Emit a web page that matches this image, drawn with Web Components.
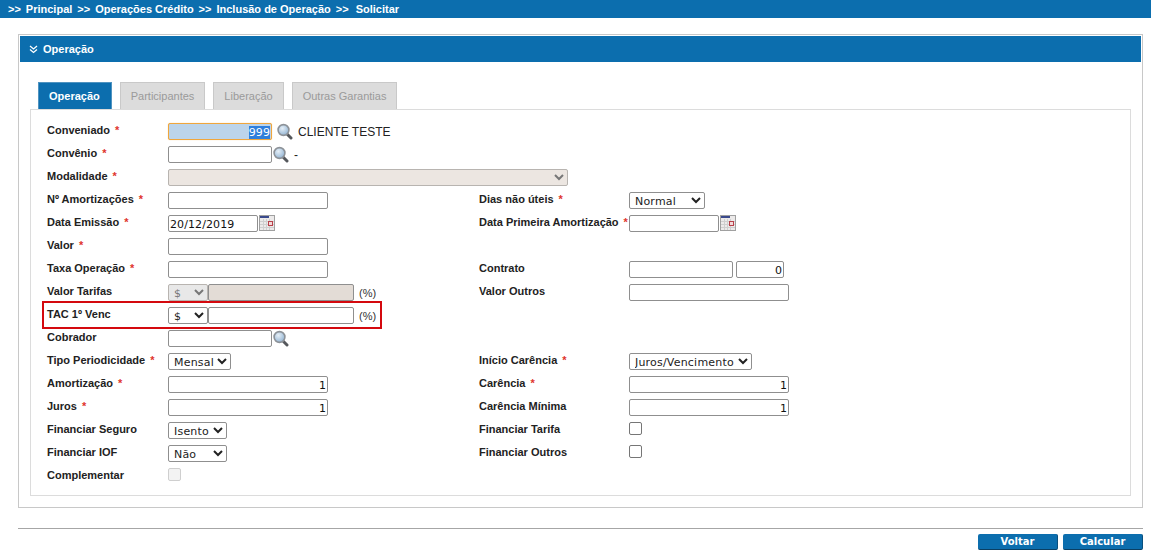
<!DOCTYPE html>
<html lang="pt-BR">
<head>
<meta charset="utf-8">
<title>Solicitar</title>
<style>
  html, body { margin: 0; background: #fff; }
  body { font-family: "Liberation Sans", Arial, sans-serif; font-size: 11px; color: #222; }
</style>
</head>
<body>
<app-breadcrumb>
  <span>Principal</span><span>Operações Crédito</span><span>Inclusão de Operação</span><span>Solicitar</span>
</app-breadcrumb>

<app-page>
  <app-panel title="Operação">
    <app-tabs>
      <app-tab active>Operação</app-tab>
      <app-tab>Participantes</app-tab>
      <app-tab>Liberação</app-tab>
      <app-tab>Outras Garantias</app-tab>
    </app-tabs>
    <form-box>
      <form-row>
        <form-label slot="label" required>Conveniado</form-label>
        <text-box slot="field" width="104" value="999" focused></text-box>
        <search-icon slot="field" gap="5"></search-icon>
        <span slot="field" class="desc">CLIENTE TESTE</span>
      </form-row>
      <form-row>
        <form-label slot="label" required>Convênio</form-label>
        <text-box slot="field" width="104"></text-box>
        <search-icon slot="field"></search-icon>
        <span slot="field" class="dash">-</span>
      </form-row>
      <form-row>
        <form-label slot="label" required>Modalidade</form-label>
        <select-box slot="field" width="400" disabled bg="#ece6e1"></select-box>
      </form-row>
      <form-row>
        <form-label slot="label" required>Nº Amortizações</form-label>
        <text-box slot="field" width="160"></text-box>
        <form-label slot="label2" required>Dias não úteis</form-label>
        <select-box slot="field2" width="76" value="Normal"></select-box>
      </form-row>
      <form-row>
        <form-label slot="label" required>Data Emissão</form-label>
        <text-box slot="field" width="90" value="20/12/2019" align="left"></text-box>
        <calendar-icon slot="field"></calendar-icon>
        <form-label slot="label2" required>Data Primeira Amortização</form-label>
        <text-box slot="field2" width="90"></text-box>
        <calendar-icon slot="field2"></calendar-icon>
      </form-row>
      <form-row>
        <form-label slot="label" required>Valor</form-label>
        <text-box slot="field" width="160"></text-box>
      </form-row>
      <form-row>
        <form-label slot="label" required>Taxa Operação</form-label>
        <text-box slot="field" width="160"></text-box>
        <form-label slot="label2">Contrato</form-label>
        <text-box slot="field2" width="104"></text-box>
        <text-box slot="field2" width="48" value="0" gap="3"></text-box>
      </form-row>
      <form-row>
        <form-label slot="label">Valor Tarifas</form-label>
        <select-box slot="field" width="40" value="$" disabled bg="#e8e8e8"></select-box>
        <text-box slot="field" width="146" disabled></text-box>
        <span slot="field" class="pct">(%)</span>
        <form-label slot="label2">Valor Outros</form-label>
        <text-box slot="field2" width="160"></text-box>
      </form-row>
      <form-row highlight>
        <form-label slot="label">TAC 1º Venc</form-label>
        <select-box slot="field" width="40" value="$"></select-box>
        <text-box slot="field" width="146"></text-box>
        <span slot="field" class="pct">(%)</span>
      </form-row>
      <form-row>
        <form-label slot="label">Cobrador</form-label>
        <text-box slot="field" width="104"></text-box>
        <search-icon slot="field"></search-icon>
      </form-row>
      <form-row>
        <form-label slot="label" required>Tipo Periodicidade</form-label>
        <select-box slot="field" width="63" value="Mensal"></select-box>
        <form-label slot="label2" required>Início Carência</form-label>
        <select-box slot="field2" width="123" value="Juros/Vencimento"></select-box>
      </form-row>
      <form-row>
        <form-label slot="label" required>Amortização</form-label>
        <text-box slot="field" width="160" value="1"></text-box>
        <form-label slot="label2" required>Carência</form-label>
        <text-box slot="field2" width="160" value="1"></text-box>
      </form-row>
      <form-row>
        <form-label slot="label" required>Juros</form-label>
        <text-box slot="field" width="160" value="1"></text-box>
        <form-label slot="label2">Carência Mínima</form-label>
        <text-box slot="field2" width="160" value="1"></text-box>
      </form-row>
      <form-row>
        <form-label slot="label">Financiar Seguro</form-label>
        <select-box slot="field" width="59" value="Isento"></select-box>
        <form-label slot="label2">Financiar Tarifa</form-label>
        <check-box slot="field2"></check-box>
      </form-row>
      <form-row>
        <form-label slot="label">Financiar IOF</form-label>
        <select-box slot="field" width="59" value="Não"></select-box>
        <form-label slot="label2">Financiar Outros</form-label>
        <check-box slot="field2"></check-box>
      </form-row>
      <form-row>
        <form-label slot="label">Complementar</form-label>
        <check-box slot="field" disabled></check-box>
      </form-row>
    </form-box>
  </app-panel>
  <app-footer>
    <app-button>Voltar</app-button>
    <app-button>Calcular</app-button>
  </app-footer>
</app-page>

<script>
  const BLUE = '#0c6eae';

  // small helper so every element below has the same setup
  class Base extends HTMLElement {
    constructor() {
      super();
      this.shadow = this.attachShadow({mode: 'open'});
    }

    connectedCallback() {
      this.render();
    }
  }

  class AppBreadcrumb extends Base {
    render() {
      const parts = [...this.children].map((el) => `<i>&gt;&gt;</i><b>${el.textContent}</b>`).join('');
      this.shadow.innerHTML = `
        <style>
          :host{
            display: flex;
            align-items: center;
            height: 18px;
            padding: 0 0 1px 8px;
            box-sizing: border-box;
            background: ${BLUE};
            color: #fff;
            font: bold 11px "Liberation Sans", Arial, sans-serif;
          }
          i{ font-style: normal; margin-right: 5px; }
          b{ margin-right: 5px; }
          b:last-child{ margin-left: 2px; }
        </style>
        ${parts}
      `;
    }
  }

  class AppPage extends Base {
    render() {
      this.shadow.innerHTML = `
        <style>
          :host{
            display: block;
            width: 1125px;
            margin: 16px 0 0 18px;
          }
        </style>
        <slot></slot>
      `;
    }
  }

  class AppPanel extends Base {
    render() {
      this.shadow.innerHTML = `
        <style>
          :host{
            display: block;
            border: 1px solid #c8c8c8;
            padding: 1px;
          }
          .head{
            display: flex;
            align-items: center;
            gap: 5px;
            height: 26px;
            padding-left: 9px;
            background: ${BLUE};
            color: #fff;
            font: bold 11px "Liberation Sans", Arial, sans-serif;
          }
          .body{
            padding: 20px 10px 10px;
          }
        </style>
        <div class="head">
          <svg width="9" height="9" viewBox="0 0 9 9" fill="none" stroke="#fff" stroke-width="1.3">
            <path d="M1 1 L4.5 4 L8 1 M1 4.5 L4.5 7.5 L8 4.5"/>
          </svg>
          <span>${this.getAttribute('title')}</span>
        </div>
        <div class="body"><slot></slot></div>
      `;
    }
  }

  class AppTabs extends Base {
    render() {
      this.shadow.innerHTML = `
        <style>
          :host{
            display: flex;
            gap: 8px;
            margin-left: 8px;
            height: 27px;
          }
        </style>
        <slot></slot>
      `;
    }
  }

  class AppTab extends Base {
    render() {
      const active = this.hasAttribute('active');
      this.shadow.innerHTML = `
        <style>
          :host{
            display: flex;
            align-items: center;
            box-sizing: border-box;
            height: 27px;
            padding: 0 ${active ? 11 : 10}px 0 10px;
            border: 1px solid ${active ? '#4f93c0' : '#c9c9c9'};
            border-bottom: none;
            background: ${active ? BLUE : '#dcdcdc'};
            color: ${active ? '#fff' : '#9a9a9a'};
            font: ${active ? 'bold' : 'normal'} 11px "Liberation Sans", Arial, sans-serif;
          }
        </style>
        <slot></slot>
      `;
    }
  }

  class FormBox extends Base {
    render() {
      this.shadow.innerHTML = `
        <style>
          :host{
            display: block;
            border: 1px solid #dcdcdc;
            padding: 12px 16px 5px;
          }
        </style>
        <slot></slot>
      `;
    }
  }

  class FormRow extends Base {
    render() {
      this.shadow.innerHTML = `
        <style>
          :host{
            display: grid;
            grid-template-columns: 121px 311px 150px 1fr;
            height: 23px;
            position: relative;
          }
          .cell{
            display: flex;
            align-items: flex-start;
            padding-top: 1px;
          }
          ::slotted(.desc){
            margin: 2px 0 0 5px;
            font-size: 12px;
            color: #222;
          }
          ::slotted(.dash){
            margin: 2px 0 0 5px;
            font-size: 12px;
          }
          ::slotted(.pct){
            margin: 3px 0 0 5px;
            font-size: 11px;
            color: #333;
          }
          .mark{
            position: absolute;
            left: -5px;
            top: -5px;
            width: 340px;
            height: 28px;
            box-sizing: border-box;
            border: 2px solid #d4090e;
            pointer-events: none;
          }
        </style>
        <div class="cell"><slot name="label"></slot></div>
        <div class="cell"><slot name="field"></slot></div>
        <div class="cell"><slot name="label2"></slot></div>
        <div class="cell"><slot name="field2"></slot></div>
        ${this.hasAttribute('highlight') ? '<div class="mark"></div>' : ''}
      `;
    }
  }

  class FormLabel extends Base {
    render() {
      const star = this.hasAttribute('required') ? '<em>*</em>' : '';
      this.shadow.innerHTML = `
        <style>
          :host{
            display: block;
            white-space: nowrap;
            font: bold 11px/14px "Liberation Sans", Arial, sans-serif;
            color: #222;
          }
          em{
            font-style: normal;
            color: #e0342c;
            margin-left: 5px;
          }
        </style>
        <slot></slot>${star}
      `;
    }
  }

  class TextBox extends Base {
    render() {
      const value = this.getAttribute('value') || '';
      const focused = this.hasAttribute('focused');
      const disabled = this.hasAttribute('disabled');
      const bg = focused ? '#bcd4ea' : disabled ? '#e3dcd6' : '#fff';
      this.shadow.innerHTML = `
        <style>
          :host{
            display: block;
            flex: none;
            box-sizing: border-box;
            width: ${this.getAttribute('width')}px;
            height: 17px;
            margin-left: ${this.getAttribute('gap') || 0}px;
            padding: 0 1px;
            border: 1px solid ${focused ? '#f0a63c' : '#8f8f8f'};
            border-radius: 2px;
            background: ${bg};
            ${focused ? 'box-shadow: 0 0 1px #f5c06f;' : ''}
            text-align: ${this.getAttribute('align') || 'right'};
            font: 11px/17px "DejaVu Sans", Verdana, sans-serif;
            letter-spacing: 0.1px;
            color: #111;
          }
          span.sel{
            background: #2f7fdc;
            color: #fff;
          }
        </style>
        <span class="${focused ? 'sel' : ''}">${value}</span>
      `;
    }
  }

  class SelectBox extends Base {
    render() {
      const value = this.getAttribute('value') || '';
      const disabled = this.hasAttribute('disabled');
      this.shadow.innerHTML = `
        <style>
          :host{
            display: block;
            flex: none;
            width: ${this.getAttribute('width')}px;
            height: 17px;
          }
          select{
            display: block;
            width: 100%;
            height: 17px;
            margin: 0;
            padding: 1px 0 0 1px;
            box-sizing: border-box;
            border: 1px solid #8f8f8f;
            border-radius: 2px;
            background-color: ${this.getAttribute('bg') || '#fff'};
            font: 11px "DejaVu Sans", Verdana, sans-serif;
            letter-spacing: 0.2px;
            color: #222;
            opacity: 1;
          }
          select:disabled{
            color: #777;
            border-color: #b8b4b0;
          }
        </style>
        <select ${disabled ? 'disabled' : ''}><option>${value}</option></select>
      `;
    }
  }

  class CheckBox extends Base {
    render() {
      const disabled = this.hasAttribute('disabled');
      this.shadow.innerHTML = `
        <style>
          :host{
            display: block;
            box-sizing: border-box;
            width: 13px;
            height: 13px;
            border: 1px solid ${disabled ? '#cfcfcf' : '#767676'};
            border-radius: 2px;
            background: ${disabled ? '#f3f3f3' : '#fff'};
          }
        </style>
      `;
    }
  }

  class SearchIcon extends Base {
    render() {
      this.shadow.innerHTML = `
        <style>
          :host{
            display: block;
            flex: none;
            width: 16px;
            height: 17px;
            margin-left: ${this.getAttribute('gap') || 1}px;
          }
        </style>
        <svg width="16" height="17" viewBox="0 0 16 17">
          <defs>
            <radialGradient id="lens" cx="40%" cy="35%" r="70%">
              <stop offset="0" stop-color="#e6eff7"/>
              <stop offset="1" stop-color="#8fb2d2"/>
            </radialGradient>
          </defs>
          <path d="M10 11 L14 15" stroke="#55585c" stroke-width="3" stroke-linecap="round"/>
          <circle cx="6.5" cy="7" r="5.4" fill="url(#lens)" stroke="#8d9298" stroke-width="1.6"/>
        </svg>
      `;
    }
  }

  class CalendarIcon extends Base {
    render() {
      this.shadow.innerHTML = `
        <style>
          :host{
            display: block;
            flex: none;
            width: 16px;
            height: 16px;
            margin-left: 1px;
          }
        </style>
        <svg width="16" height="16" viewBox="0 0 16 16" shape-rendering="crispEdges">
          <rect x="0.5" y="0.5" width="15" height="15" fill="#eceaea" stroke="#a0a0a0"/>
          <rect x="1" y="1" width="9" height="2" fill="#3a4a8c"/>
          <path d="M1 6.5H15M1 9.5H15M1 12.5H15M4.5 4V15M7.5 4V15M10.5 4V15" stroke="#cfcfcf" fill="none"/>
          <rect x="9.5" y="6.5" width="4" height="4" fill="#f3d9d9" stroke="#b8404a"/>
        </svg>
      `;
    }
  }

  class AppFooter extends Base {
    render() {
      this.shadow.innerHTML = `
        <style>
          :host{
            display: flex;
            justify-content: flex-end;
            gap: 5px;
            margin-top: 20px;
            padding-top: 5px;
            border-top: 1px solid #a6a6a6;
          }
        </style>
        <slot></slot>
      `;
    }
  }

  class AppButton extends Base {
    render() {
      this.shadow.innerHTML = `
        <style>
          :host{
            display: flex;
            align-items: center;
            justify-content: center;
            box-sizing: border-box;
            width: 80px;
            height: 16px;
            border-radius: 2px;
            border-bottom: 1px solid #0a3f63;
            border-right: 1px solid #0a4f7d;
            background: ${BLUE};
            color: #fff;
            font: bold 10px "DejaVu Sans", Verdana, sans-serif;
          }
        </style>
        <slot></slot>
      `;
    }
  }

  customElements.define('app-breadcrumb', AppBreadcrumb);
  customElements.define('app-page', AppPage);
  customElements.define('app-panel', AppPanel);
  customElements.define('app-tabs', AppTabs);
  customElements.define('app-tab', AppTab);
  customElements.define('form-box', FormBox);
  customElements.define('form-row', FormRow);
  customElements.define('form-label', FormLabel);
  customElements.define('text-box', TextBox);
  customElements.define('select-box', SelectBox);
  customElements.define('check-box', CheckBox);
  customElements.define('search-icon', SearchIcon);
  customElements.define('calendar-icon', CalendarIcon);
  customElements.define('app-footer', AppFooter);
  customElements.define('app-button', AppButton);
</script>
</body>
</html>
